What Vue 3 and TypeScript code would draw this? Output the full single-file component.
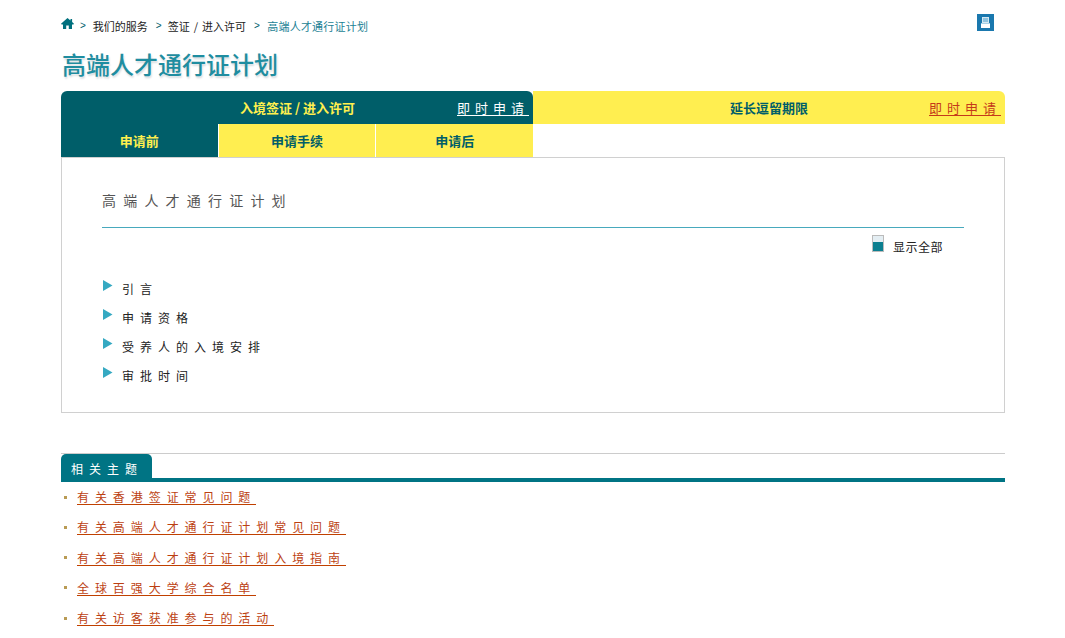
<script setup lang="ts">
const crumbs: string[] = ['我们的服务', '签证 / 进入许可']
const sections: string[] = ['引言', '申请资格', '受养人的入境安排', '审批时间']
const links: string[] = ['有关香港签证常见问题', '有关高端人才通行证计划常见问题', '有关高端人才通行证计划入境指南', '全球百强大学综合名单', '有关访客获准参与的活动']
</script>

<template>
  <div class="page">
    <div class="top">
      <nav class="crumbs">
        <svg class="home" width="13" height="11" viewBox="0 0 13 11"><path d="M6.5 0 9.5 2.6V1h1.6v3L13 5.8l-.6.7H11V11H7.8V7.6H5.2V11H2V6.5H.6L0 5.8z" fill="#00707e" /></svg>
        <template v-for="c in crumbs" :key="c">
          <span class="sep">&gt;</span><span class="crumb">{{ c }}</span>
        </template>
        <span class="sep">&gt;</span><span class="crumb current">高端人才通行证计划</span>
      </nav>
      <div class="print">
        <svg width="17" height="17" viewBox="0 0 17 17"><rect width="17" height="17" fill="#1a78ae" /><rect x="5.5" y="3.5" width="6" height="5" fill="#8fc3de" stroke="#d5e8f2" /><rect x="4" y="9" width="9" height="1" fill="#a9d3e8" /><rect x="4" y="10" width="9" height="4" fill="#fff" /></svg>
      </div>
    </div>
    <h1>高端人才通行证计划</h1>

    <div class="main-tabs">
      <div class="main-tab on">
        <span class="tab-title">入境签证 / 进入许可</span>
        <a class="apply">即时申请</a>
      </div>
      <div class="main-tab off">
        <span class="tab-title">延长逗留期限</span>
        <a class="apply">即时申请</a>
      </div>
    </div>
    <div class="sub-tabs">
      <div class="sub on">申请前</div>
      <div class="sub">申请手续</div>
      <div class="sub">申请后</div>
    </div>

    <section class="box">
      <h2>高端人才通行证计划</h2>
      <div class="show-row">
        <span class="toggle"><i></i></span>
        <span class="show-text">显示全部</span>
      </div>
      <ul class="sections">
        <li v-for="s in sections" :key="s">
          <svg width="10" height="11" viewBox="0 0 10 11"><path d="M0 0 9.5 5.5 0 11z" fill="#35a9c2" /></svg>
          <span>{{ s }}</span>
        </li>
      </ul>
    </section>

    <section class="related">
      <div class="rel-head"><span class="rel-tab">相关主题</span></div>
      <ul class="links">
        <li v-for="l in links" :key="l"><i class="dot"></i><a>{{ l }}</a></li>
      </ul>
    </section>
  </div>
</template>

<style>
html, body { margin: 0; background: #fff; }
</style>

<style scoped>
.page {
  width: 944px;
  height: 638px;
  overflow: hidden;
  padding-left: 61px;
  font-family: "Noto Sans CJK SC", "Liberation Sans", sans-serif;
  color: #222;
}
.top {
  display: flex;
  justify-content: space-between;
  height: 46px;
  padding-top: 14px;
  box-sizing: border-box;
}
.crumbs {
  display: flex;
  align-items: flex-start;
  font-size: 11px;
  line-height: 16px;
  margin-top: 4px;
}
.home { margin-top: 0; }
.sep { color: #00606c; margin: 0 6px 0 8px; font-family: "Liberation Sans", sans-serif; font-size: 10px; }
.home + .sep { margin-left: 6px; margin-right: 7px; }
.crumb { color: #222; word-spacing: 1.5px; }
.current { color: #1b7f94; letter-spacing: 0.2px; margin-left: 1.5px; }
.print { margin-right: 11px; height: 17px; }
.print svg { display: block; }
h1 {
  margin: 0 0 0 1px;
  height: 45px;
  font-size: 24px;
  line-height: 35px;
  font-weight: 500;
  color: #1f8da0;
  text-shadow: 1px 2px 2px #d8dde0;
}
.main-tabs { display: flex; height: 33px; }
.main-tab {
  width: 472px;
  display: flex;
  align-items: center;
  position: relative;
  font-size: 13px;
  font-weight: 700;
}
.main-tab.on { background: #005e69; color: #fff04e; border-radius: 6px 6px 0 0; }
.main-tab.off { background: #ffee50; color: #005e69; border-radius: 0 6px 0 0; }
.tab-title { position: absolute; white-space: nowrap; }
.on .tab-title { left: 179px; }
.off .tab-title { left: 197px; }
.apply {
  position: absolute;
  right: 4px;
  top: 9px;
  font-size: 13px;
  line-height: 15px;
  font-weight: 400;
  letter-spacing: 5px;
  border-bottom: 1px solid currentColor;
  white-space: nowrap;
}
.on .apply { color: #fff; }
.off .apply { color: #c5391a; }
.sub-tabs { display: flex; height: 33px; width: 472px; gap: 1px; }
.sub {
  flex: 1;
  background: #ffee50;
  color: #005e69;
  font-size: 13px;
  font-weight: 700;
  line-height: 33px;
  text-align: center;
}
.sub.on { background: #005e69; color: #fff04e; }
.box {
  height: 256px;
  box-sizing: border-box;
  border: 1px solid #d0d0d0;
  padding: 0 40px;
}
h2 {
  margin: 0;
  height: 70px;
  box-sizing: border-box;
  border-bottom: 1px solid #48a9bd;
  font-size: 14px;
  line-height: 85px;
  font-weight: 400;
  letter-spacing: 7.2px;
  color: #555;
}
.show-row {
  display: flex;
  justify-content: flex-end;
  align-items: flex-start;
  gap: 9px;
  height: 42px;
  padding: 7px 21px 0 0;
}
.toggle {
  width: 12px;
  height: 17px;
  box-sizing: border-box;
  border: 1px solid #bbb;
  background: #e4eef3;
  display: flex;
  align-items: flex-end;
}
.toggle i { display: block; width: 100%; height: 9px; background: #0b7f90; }
.show-text { font-size: 12px; line-height: 17px; margin-top: 3px; color: #222; letter-spacing: 0.5px; }
.sections { list-style: none; margin: 0; padding: 0; }
.sections li {
  display: flex;
  align-items: flex-start;
  gap: 9px;
  height: 29px;
  font-size: 12px;
  line-height: 20px;
  letter-spacing: 6px;
  padding-left: 1px;
}
.sections svg { margin-top: 3px; }
.sections span { margin-top: 2px; }
.related { margin-top: 40px; }
.rel-head {
  height: 29px;
  box-sizing: border-box;
  border-top: 1px solid #ccc;
  border-bottom: 4px solid #007484;
  display: flex;
  align-items: flex-end;
}
.rel-tab {
  height: 24px;
  width: 91px;
  box-sizing: border-box;
  background: #007484;
  color: #fff;
  font-size: 12px;
  line-height: 29px;
  letter-spacing: 6px;
  padding-left: 10px;
  border-radius: 5px 5px 0 0;
}
.links { list-style: none; margin: 0; padding: 0; }
.links li {
  display: flex;
  align-items: center;
  height: 30.25px;
  font-size: 12px;
  padding-left: 3px;
}
.dot { width: 3px; height: 3px; background: #b99b54; margin-right: 10px; }
.links a {
  color: #bc3f12;
  letter-spacing: 5.93px;
  line-height: 15px;
  border-bottom: 1px solid #c04000;
}
</style>
